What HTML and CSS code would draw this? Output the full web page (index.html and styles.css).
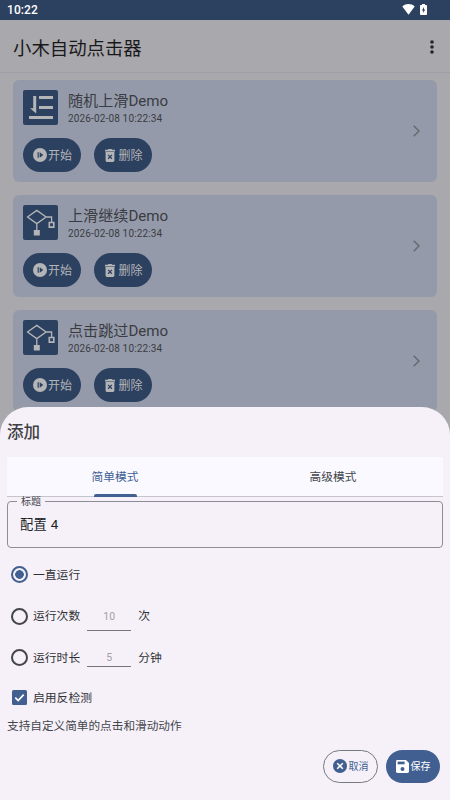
FILE: index.html
```html
<!DOCTYPE html>
<html lang="zh-CN">
<head>
<meta charset="utf-8">
<title>小木自动点击器</title>
<link rel="stylesheet" href="styles.css">
</head>
<body>
<svg class="defs" width="0" height="0" aria-hidden="true">
  <symbol id="play" viewBox="0 0 14 14"><circle cx="7" cy="7" r="7" fill="currentColor"/><path class="cut" d="M4.6 4.2h1.2v5.6H4.6zM6.7 4.2 10.3 7 6.7 9.8z"/></symbol>
  <symbol id="trash" viewBox="0 0 10 13"><path fill="currentColor" d="M0 .8h2.7L3.4 0h3.2l.7.8H10v1.6H0zM.6 3.1h8.8v8.5c0 .8-.6 1.4-1.4 1.4H2c-.8 0-1.4-.6-1.4-1.4z"/><path class="cutline" d="m3.1 5.9 3.8 3.8m0-3.8L3.1 9.7"/></symbol>
  <symbol id="flow" viewBox="0 0 35 35"><g fill="none" stroke="currentColor" stroke-width="1.3"><path d="m4.5 12 9.3-6.6 9.3 6.6-9.3 6.600zM23.1 12h5.500v5M13.800 18.600V26"/><path stroke-width="1.600" d="M26.300 17.500h4.500v4.600h-4.500z"/></g><path fill="currentColor" d="M10.800 25h6v5.500h-6z"/></symbol>
  <symbol id="steps" viewBox="0 0 35 35"><path fill="currentColor" d="M10.200 6h3v17.500L7 18.300h3.200zM16 6h14v3H16zM16 16h14v3H16zM6 26h24v3H6z"/></symbol>
</svg>
<div class="screen">
  <div class="status"><span>10:22</span>
    <div class="signals">
      <svg width="13" height="11" viewBox="0 0 13 11"><path fill="#fff" d="M.3 2.4C4-.7 9-.7 12.700 2.400L6.500 10.700z"/></svg>
      <svg width="7" height="11" viewBox="0 0 7 11"><path fill="#fff" d="M2 0h3v1h1.200q.8 0 .8.8v8.400q0 .8-.8.8H.8Q0 11 0 10.200V1.800Q0 1 .8 1H2z"/><path fill="#2c4060" d="M4 3 1.900 6.500h1.300V9l2-3.500H4z"/></svg>
    </div>
  </div>
  <header class="appbar"><h1>小木自动点击器</h1>
    <svg width="4" height="14" viewBox="0 0 4 14" fill="#252529"><circle cx="2" cy="2" r="1.800"/><circle cx="2" cy="7" r="1.800"/><circle cx="2" cy="12" r="1.800"/></svg>
  </header>
  <main class="list">
    <article class="card">
      <div class="info"><svg class="thumb"><use href="#steps"/></svg><div><h2>随机上滑Demo</h2><time>2026-02-08 10:22:34</time></div></div>
      <div class="actions"><button class="pill"><svg class="play"><use href="#play"/></svg><span>开始</span></button><button class="pill"><svg class="trash"><use href="#trash"/></svg><span>删除</span></button></div>
      <svg class="chevron" viewBox="0 0 7 12"><path d="m.7.7 5.300 5.300L.7 11.300"/></svg>
    </article>
    <article class="card">
      <div class="info"><svg class="thumb"><use href="#flow"/></svg><div><h2>上滑继续Demo</h2><time>2026-02-08 10:22:34</time></div></div>
      <div class="actions"><button class="pill"><svg class="play"><use href="#play"/></svg><span>开始</span></button><button class="pill"><svg class="trash"><use href="#trash"/></svg><span>删除</span></button></div>
      <svg class="chevron" viewBox="0 0 7 12"><path d="m.7.7 5.300 5.300L.7 11.300"/></svg>
    </article>
    <article class="card">
      <div class="info"><svg class="thumb"><use href="#flow"/></svg><div><h2>点击跳过Demo</h2><time>2026-02-08 10:22:34</time></div></div>
      <div class="actions"><button class="pill"><svg class="play"><use href="#play"/></svg><span>开始</span></button><button class="pill"><svg class="trash"><use href="#trash"/></svg><span>删除</span></button></div>
      <svg class="chevron" viewBox="0 0 7 12"><path d="m.7.7 5.300 5.300L.7 11.300"/></svg>
    </article>
  </main>
  <section class="sheet">
    <h3>添加</h3>
    <nav class="tabs"><div class="tab active"><span>简单模式</span></div><div class="tab"><span>高级模式</span></div></nav>
    <fieldset class="field"><legend>标题</legend><div class="value">配置 4</div></fieldset>
    <div class="options">
      <div class="option"><i class="radio on"></i><span>一直运行</span></div>
      <div class="option count"><i class="radio"></i><span>运行次数</span><div class="num">10</div><span>次</span></div>
      <div class="option duration"><i class="radio"></i><span>运行时长</span><div class="num">5</div><span>分钟</span></div>
      <div class="option detect"><svg class="check" viewBox="0 0 15 15"><rect width="15" height="15" rx="1.500" fill="#415f91"/><path d="m3.300 7.600 2.900 2.900 5.500-5.800" fill="none" stroke="#fff" stroke-width="1.700"/></svg><span>启用反检测</span></div>
    </div>
    <p class="hint">支持自定义简单的点击和滑动动作</p>
    <footer class="footer">
      <button class="cancel"><svg width="14" height="14" viewBox="0 0 14 14"><circle cx="7" cy="7" r="7" fill="#415f91"/><path d="m4.200 4.200 5.600 5.600m0-5.600L4.200 9.800" stroke="#fff" stroke-width="1.600"/></svg><span>取消</span></button>
      <button class="save"><svg width="13" height="13" viewBox="0 0 13 13"><path fill="#fff" d="M1.400 0H10l3 3v8.600q0 1.400-1.400 1.400H1.400Q0 13 0 11.600V1.400Q0 0 1.400 0z"/><path fill="#415f91" d="M1.600 1.600h7v2.700h-7z"/><circle cx="6.500" cy="8.900" r="2" fill="#415f91"/></svg><span>保存</span></button>
    </footer>
  </section>
</div>
</body>
</html>
```
FILE: styles.css
```css
* { box-sizing: border-box; }
body { margin: 0; font-family: Roboto, "Noto Sans CJK SC", sans-serif; }
h1, h2, h3, p { margin: 0; font-weight: 400; }
button { font: inherit; border: 0; padding: 0; margin: 0; }
svg { display: block; flex: none; }
.defs { position: absolute; }
.screen { position: relative; width: 450px; height: 800px; overflow: hidden; background: #a9a8ac; }
.status { height: 20px; padding: 0 23px 0 7px; background: #2c4060; color: #fff; display: flex; align-items: center; justify-content: space-between; font-size: 12px; font-weight: 500; letter-spacing: .1px; }
.signals { display: flex; gap: 5px; align-items: center; margin-top: -2px; }
.appbar { height: 53px; padding: 0 16px 0 13px; display: flex; align-items: center; justify-content: space-between; border-bottom: 1px solid #9e9fa9; }
.appbar svg { margin-top: 1px; }
.appbar h1 { font-size: 18.400px; line-height: 28px; color: #19191c; margin-top: 5px; }
.list { padding: 7px 13px 0; display: flex; flex-direction: column; gap: 13px; }
.card { height: 102px; padding: 10px 17px 10px 10px; border-radius: 6px; background: #949aaa; display: grid; grid-template-columns: 1fr 7px; grid-template-rows: 35px 34px; row-gap: 13px; flex: none; }
.info { display: flex; gap: 10px; }
.thumb { width: 35px; height: 35px; border-radius: 2px; background: #2c4060; color: #b4b5b7; }
.info h2 { font-size: 15.100px; line-height: 20px; color: #3b3c42; margin-top: 1px; }
.info time { display: block; font-size: 10px; line-height: 14px; margin-top: 1px; letter-spacing: .15px; color: #3b3c42; }
.actions { display: flex; gap: 13px; grid-row: 2; }
.pill { width: 58px; height: 34px; border-radius: 17px; background: #2c4060; color: #b4b5b7; display: flex; align-items: center; justify-content: center; font-size: 12px; gap: 1px; }
.pill span { margin-top: -2px; }
.play { width: 14px; height: 14px; margin-left: 1px; }
.trash { width: 10px; height: 13px; margin-right: 2px; margin-left: 2px; }
.cut { fill: #2c4060; }
.cutline { stroke: #2c4060; stroke-width: 1.300; }
.chevron { width: 7px; height: 12px; grid-column: 2; grid-row: 1 / 3; align-self: center; fill: none; stroke: #66686d; stroke-width: 1.400; }
.sheet { position: absolute; left: 0; right: 0; top: 406.500px; bottom: 0; padding: 0 7px; border-radius: 28px 28px 0 0; background: #f6f1f9; color: #44454c; display: flex; flex-direction: column; }
.sheet h3 { height: 50px; padding-top: 13px; font-size: 16.600px; line-height: 26px; font-weight: 500; color: #3f3f45; }
.tabs { height: 40px; display: grid; grid-template-columns: 1fr 1fr; background: #f9f9ff; border-bottom: 1px solid #c4c5cd; font-size: 11.700px; }
.tab { display: flex; justify-content: center; line-height: 40px; padding-right: 2px; }
.tab.active { color: #415f91; }
.tab.active span { position: relative; }
.tab.active span::after { content: ""; position: absolute; left: 2px; right: 1px; bottom: 0; height: 2.500px; border-radius: 2px 2px 0 0; background: #415f91; }
.field { margin: 0; height: 51px; padding: 0 12px; min-width: 0; border: 1px solid #8c8d96; border-radius: 4px; }
.field legend { margin-left: -3px; padding: 0 4px; font-size: 10px; line-height: 10px; }
.value { font-size: 13.300px; line-height: 36px; color: #202126; letter-spacing: .3px; }
.options { font-size: 11.800px; color: #303136; padding-top: 10px; }
.option { display: flex; align-items: center; height: 34px; padding-left: 4px; }
.option > span { margin-left: 5px; line-height: 20px; }
.radio { width: 17px; height: 17px; border: 2px solid #44454c; border-radius: 50%; flex: none; }
.radio.on { border-color: #415f91; background: radial-gradient(circle, #415f91 4px, transparent 4.600px); }
.num { width: 44px; height: 31px; margin-left: 7px; margin-right: 2px; border-bottom: 1px solid #76747c; color: #a09fa6; text-align: center; font-size: 10.500px; line-height: 32px; }
.count { height: 49px; }
.count .num { height: 30px; margin-bottom: 1px; }
.duration .num { height: 24px; line-height: 30px; margin-bottom: 5px; }
.detect { margin-top: 6px; }
.check { width: 15px; height: 15px; margin: 0 1px; }
.hint { font-size: 11.650px; line-height: 20px; margin-top: 1px; }
.footer { display: flex; justify-content: flex-end; gap: 8px; padding-right: 3px; margin-top: 14px; }
.cancel, .save { width: 54px; height: 33px; border-radius: 17px; display: flex; align-items: center; justify-content: center; font-size: 10px; gap: 2px; }
.cancel span, .save span { margin-top: -2px; }
.cancel { width: 55px; border: 1px solid #777880; background: transparent; color: #415f91; }
.save { background: #415f91; color: #fff; }
```
